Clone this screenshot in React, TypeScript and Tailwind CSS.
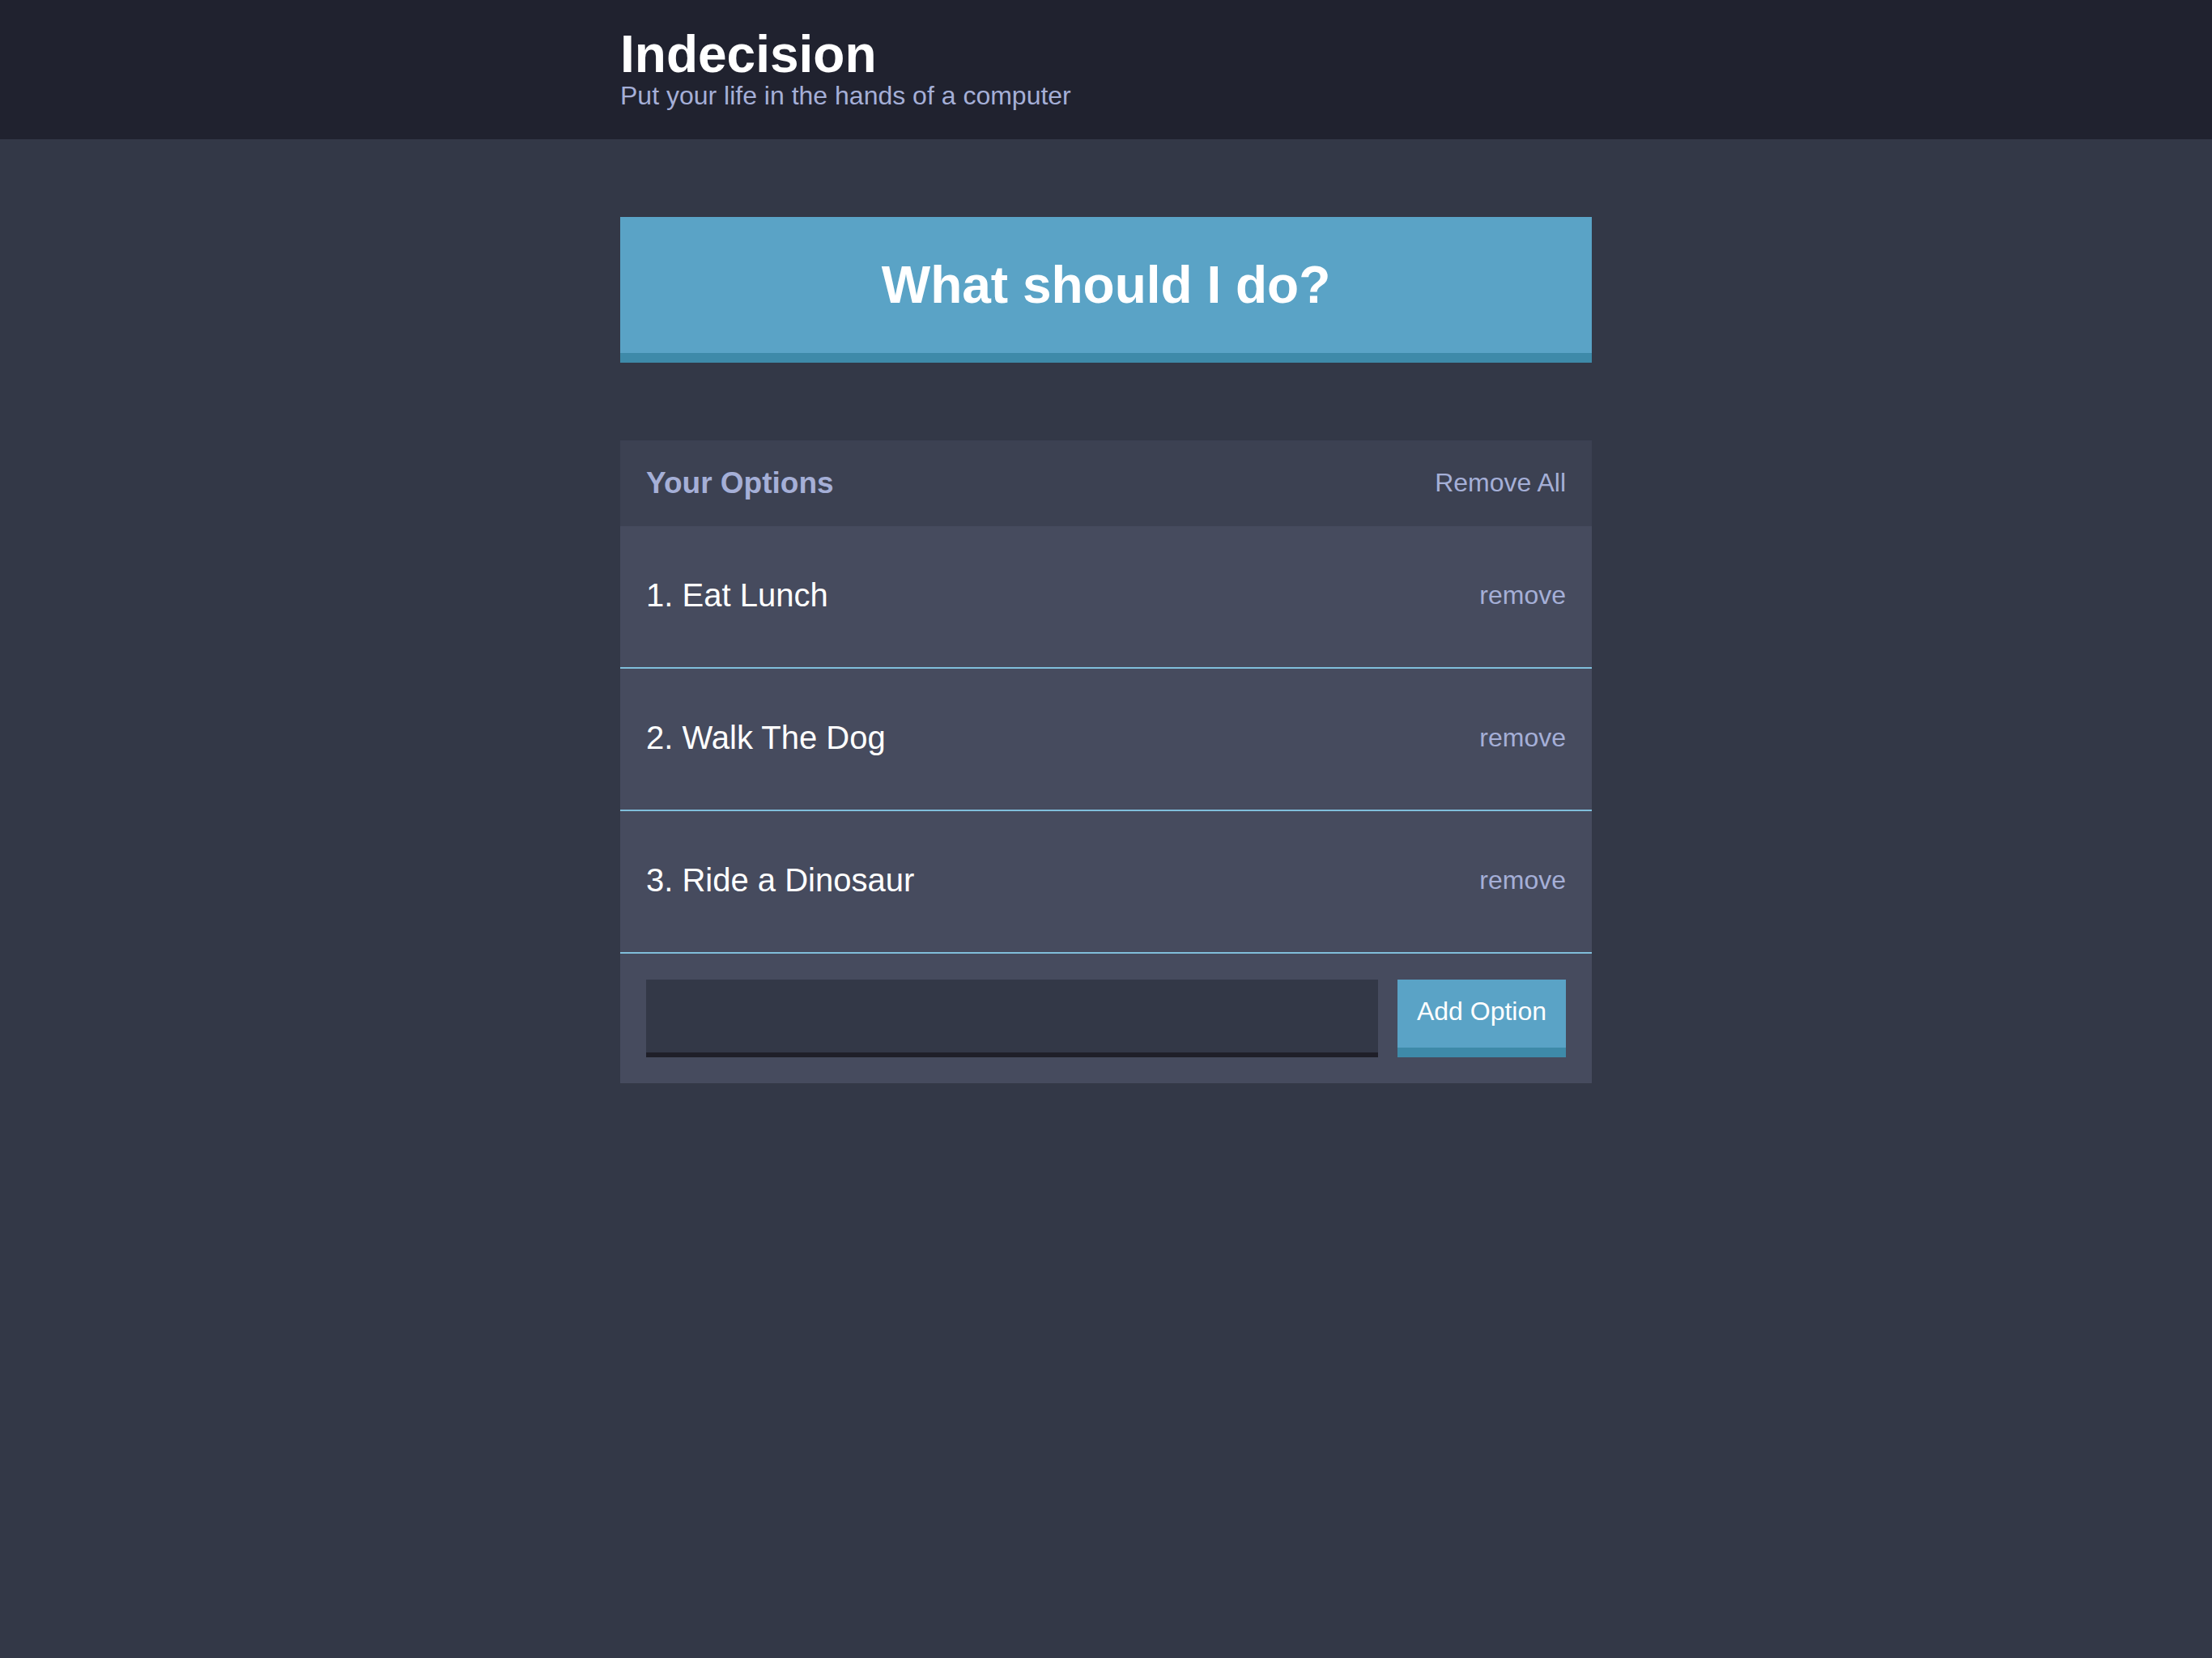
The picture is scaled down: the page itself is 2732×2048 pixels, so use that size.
import { useState } from "react";

const font = "font-['Liberation_Sans',Arial,sans-serif]";

export default function App() {
  const [options] = useState(["Eat Lunch", "Walk The Dog", "Ride a Dinosaur"]);

  return (
    <div className={`min-h-screen bg-[#333847] ${font}`}>
      <header className="bg-[#20222f] pt-[35px] pb-[35px]">
        <div className="mx-auto w-[1200px]">
          <h1 className="text-[64px] leading-[64px] font-bold text-white">Indecision</h1>
          <h2 className="text-[32px] leading-[38px] text-[#a5afd7]">Put your life in the hands of a computer</h2>
        </div>
      </header>

      <main className="mx-auto w-[1200px] pt-[96px]">
        <button className="w-full h-[180px] bg-[#5aa3c6] border-b-[12px] border-[#3e8aa9] text-white text-[64px] leading-[64px] font-bold">
          What should I do?
        </button>

        <div className="mt-[96px] bg-[#464b5e]">
          <div className="h-[106px] bg-[#3c4152] px-8 flex items-center justify-between">
            <h3 className="text-[37px] font-bold text-[#a5afd7]">Your Options</h3>
            <button className="text-[32px] text-[#a5afd7] pb-[2px]">Remove All</button>
          </div>

          {options.map((option, index) => (
            <div
              key={option}
              className="h-[176px] px-8 pb-[5px] flex items-center justify-between border-b-2 border-[#80bedb]"
            >
              <p className="text-[40px] text-white">
                {index + 1}. {option}
              </p>
              <button className="text-[32px] text-[#a5afd7]">remove</button>
            </div>
          ))}

          <form className="p-8 flex gap-6">
            <input
              type="text"
              className="flex-1 h-[96px] bg-[#333847] border-b-[6px] border-[#1f1f29] outline-none text-white text-[32px] px-4"
            />
            <button className="h-[96px] w-[208px] pb-[6px] bg-[#5aa3c6] border-b-[12px] border-[#3e8aa9] text-white text-[32px]">
              Add Option
            </button>
          </form>
        </div>
      </main>
    </div>
  );
}
